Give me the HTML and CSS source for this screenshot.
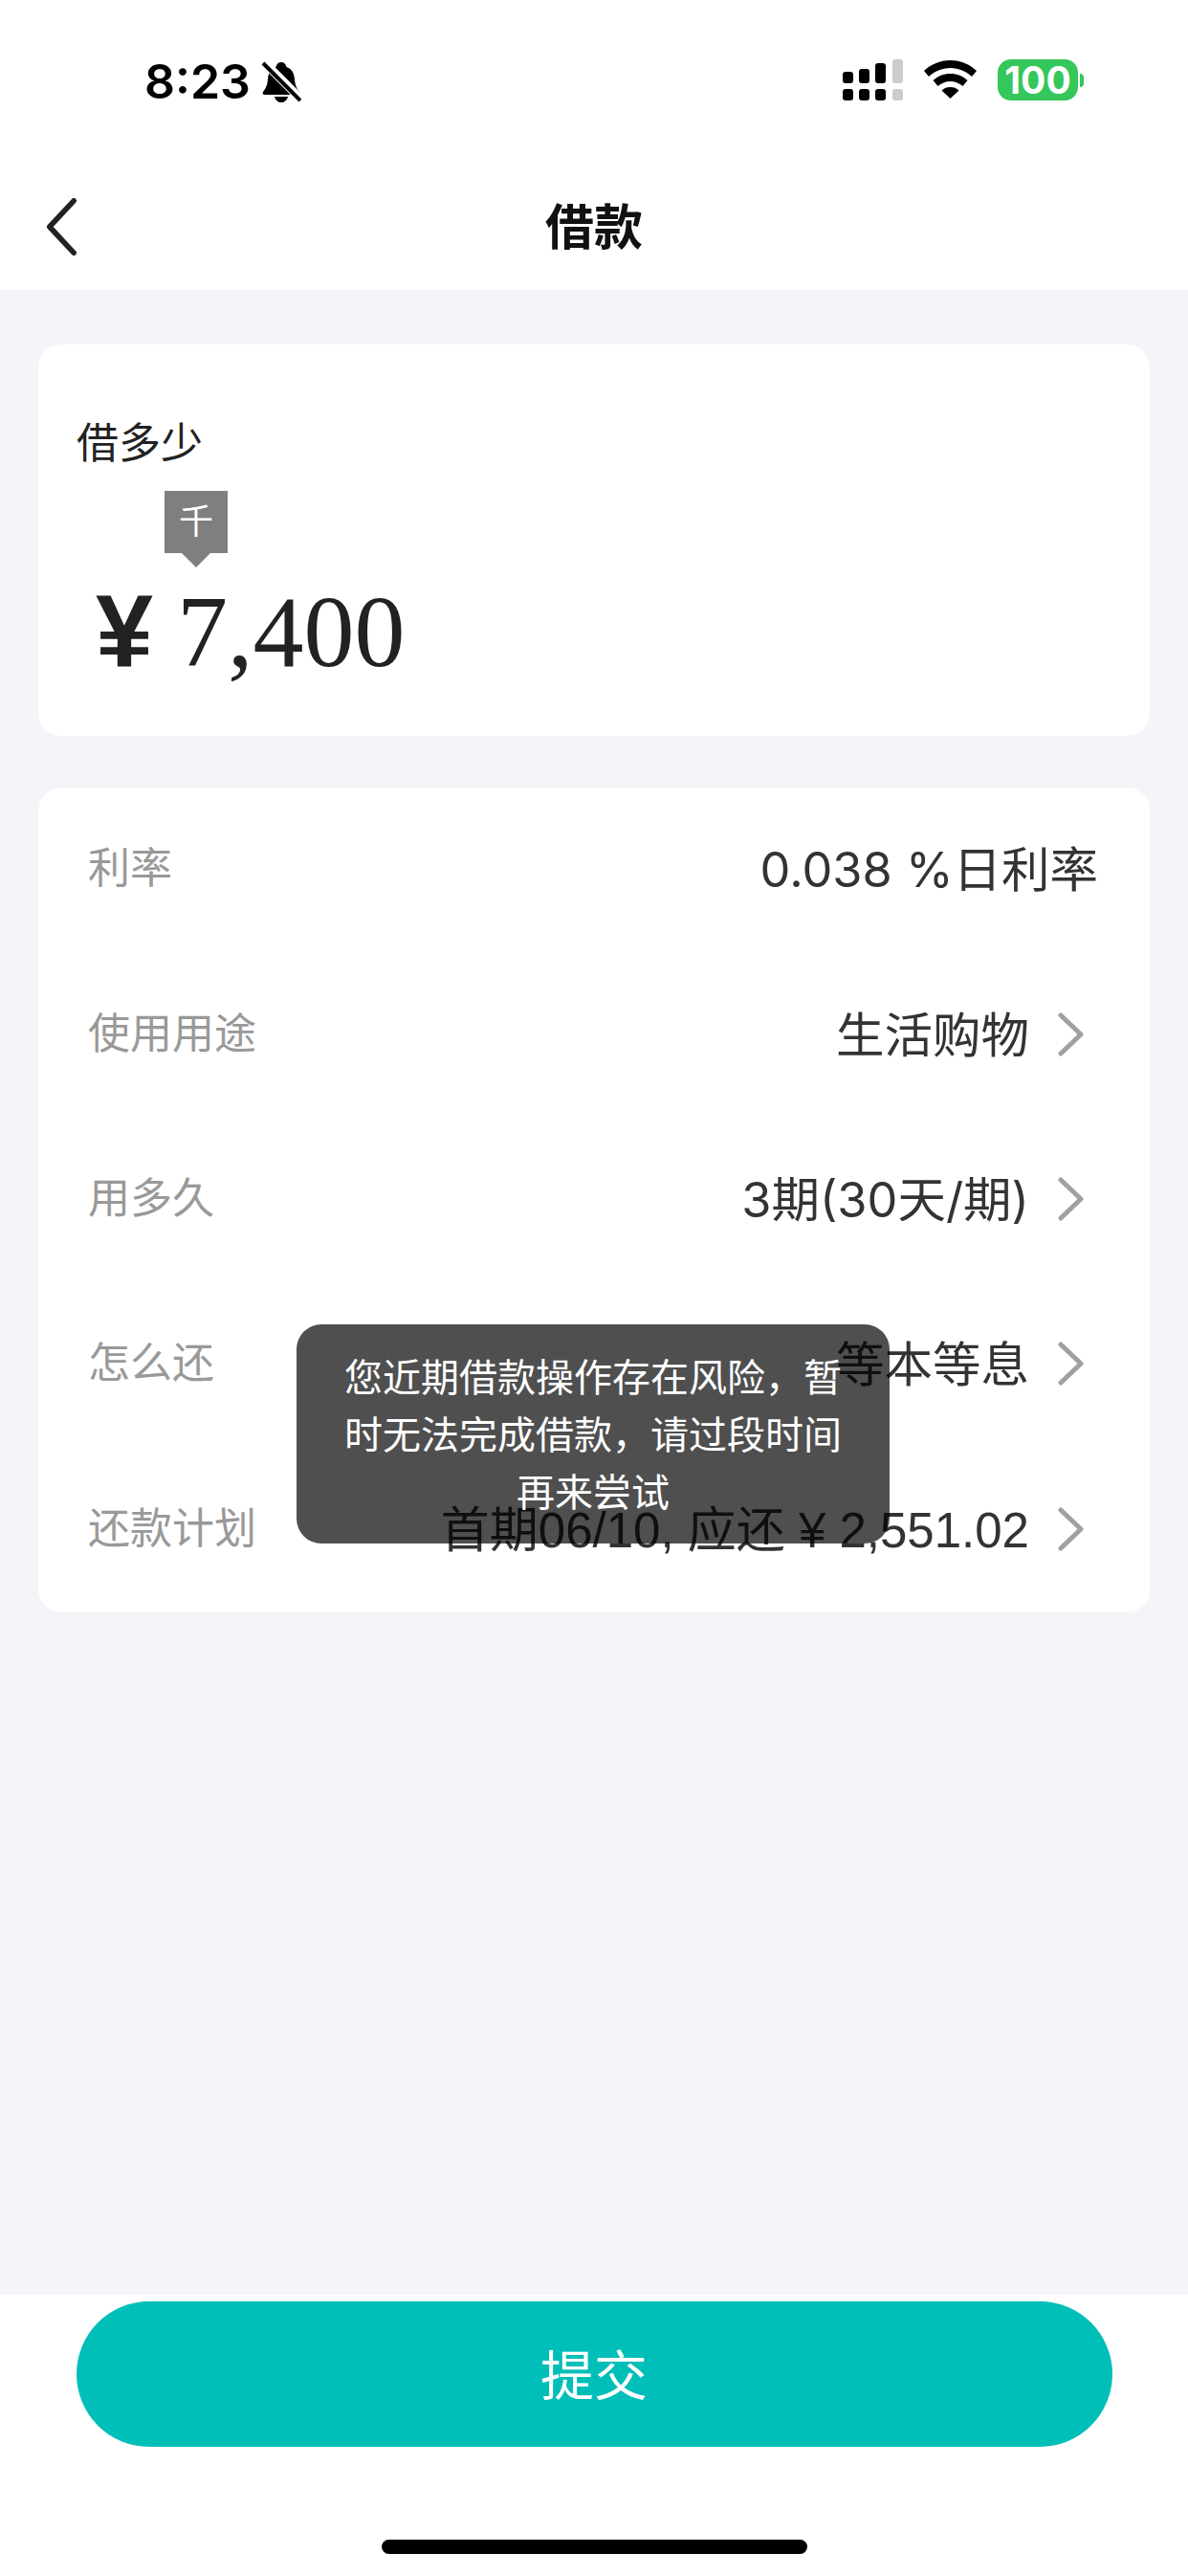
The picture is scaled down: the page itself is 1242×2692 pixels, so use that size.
FILE: index.html
```html
<!DOCTYPE html>
<html lang="zh-CN">
<head>
    <meta charset="UTF-8">
    <meta name="viewport" content="width=device-width, initial-scale=1.0">
    <title>借款</title>
    <link rel="stylesheet" href="styles.css">
</head>
<body>

<!-- Status bar -->
<div class="status-bar">
    <div class="status-left">
        <span class="clock">8:23</span>
        <svg class="bell" width="42" height="43" viewBox="0 0 42 43">
            <path d="M21 1c3 0 5 2 5.500 5 6 2 8 7 8.500 13 .5 6 2 9 5 13 1 2 0 3-2 3H4c-2 0-3-1-2-3 3-4 4.500-7 5-13 .5-6 2.500-11 8.500-13C16 3 18 1 21 1z"/>
            <path d="M14 37h14c-1 4-4 6-7 6s-6-2-7-6z"/>
            <path class="bell-gap" d="M1 -1L44 42"/>
            <path class="bell-slash" d="M2 2L41 41"/>
        </svg>
    </div>
    <div class="status-right">
        <svg class="signal" width="63" height="43" viewBox="0 0 63 43">
            <rect x="0" y="13" width="11" height="12" rx="3"/>
            <rect x="17" y="10" width="11" height="15" rx="3"/>
            <rect x="34" y="4" width="11" height="21" rx="3"/>
            <rect class="signal-off" x="52" y="0" width="11" height="25" rx="3"/>
            <rect x="0" y="31" width="11" height="12" rx="3"/>
            <rect x="17" y="31" width="11" height="12" rx="3"/>
            <rect x="34" y="31" width="11" height="12" rx="3"/>
            <rect class="signal-off" x="52" y="31" width="11" height="12" rx="3"/>
        </svg>
        <svg class="wifi" width="55" height="40" viewBox="0 0 55 40">
            <path d="M27.500 0C38 0 47.500 4 55 11l-5 6c-6-5.500-14-9-22.500-9S11 11.500 5 17l-5-6C7.500 4 17 0 27.500 0z"/>
            <path d="M27.500 14c7 0 13 2.500 18 7l-5 6c-3.500-3-8-5-13-5s-9.500 2-13 5l-5-6c5-4.500 11-7 18-7z"/>
            <path d="M27.500 28c3.500 0 6.500 1 9 3.500L27.500 40l-9-8.500c2.500-2.500 5.500-3.500 9-3.500z"/>
        </svg>
        <div class="battery">
            <span class="battery-body">100</span>
            <span class="battery-tip"></span>
        </div>
    </div>
</div>

<!-- Navigation bar -->
<header class="nav-bar">
    <svg class="back" width="36" height="64" viewBox="0 0 36 64">
        <path d="M32 3L5 32L32 61"/>
    </svg>
    <h1>借款</h1>
</header>

<main class="content">
    <section class="card amount-card">
        <div class="amount-label">借多少</div>
        <div class="unit-tag">千</div>
        <div class="amount">
            <span class="amount-sign">¥</span>
            <span class="amount-value">7,400</span>
        </div>
    </section>

    <section class="card detail-card">
        <div class="row">
            <span class="row-label">利率</span>
            <span class="row-value">0.038 %日利率</span>
        </div>
        <div class="row">
            <span class="row-label">使用用途</span>
            <span class="row-value">生活购物</span>
            <svg class="chevron" width="29" height="46" viewBox="0 0 29 46"><path d="M4 3L25 23L4 43"/></svg>
        </div>
        <div class="row">
            <span class="row-label">用多久</span>
            <span class="row-value">3期(30天/期)</span>
            <svg class="chevron" width="29" height="46" viewBox="0 0 29 46"><path d="M4 3L25 23L4 43"/></svg>
        </div>
        <div class="row">
            <span class="row-label">怎么还</span>
            <span class="row-value">等本等息</span>
            <svg class="chevron" width="29" height="46" viewBox="0 0 29 46"><path d="M4 3L25 23L4 43"/></svg>
        </div>
        <div class="row">
            <span class="row-label">还款计划</span>
            <span class="row-value plan-value">首期06/10, 应还 ¥ 2,551.02</span>
            <svg class="chevron" width="29" height="46" viewBox="0 0 29 46"><path d="M4 3L25 23L4 43"/></svg>
        </div>
    </section>
</main>

<footer class="footer">
    <button class="submit">提交</button>
    <div class="home-bar"></div>
</footer>

<!-- Toast sits over the rows -->
<div class="toast">您近期借款操作存在风险，暂时无法完成借款，请过段时间再来尝试</div>

</body>
</html>
```

FILE: styles.css
```css
/* General styles */
body {
    font-family: "Liberation Sans", "Noto Sans CJK SC", sans-serif;
    background-color: #f4f4f9;
    color: #333;
    margin: 0;
    padding: 0;
    width: 1242px;
    height: 2692px;
    display: flex;
    flex-direction: column;
    position: relative;
    overflow: hidden;
}

/* Status bar */
.status-bar {
    background-color: white;
    height: 130px;
    padding: 63px 109px 0 151px;
    box-sizing: border-box;
    display: flex;
    justify-content: space-between;
    align-items: flex-start;
    flex-shrink: 0;
}

.status-left {
    display: flex;
    align-items: center;
    gap: 11px;
}

.clock {
    font-family: Inter, sans-serif;
    font-size: 50px;
    font-weight: 600;
    line-height: 44px;
    color: black;
}

.status-right {
    display: flex;
    align-items: flex-start;
    gap: 22px;
    margin-top: -1px;
}

.bell-gap {
    stroke: white;
    stroke-width: 9;
}

.bell-slash {
    stroke: black;
    stroke-width: 4;
}

.signal-off {
    fill: #ccc;
}

.wifi {
    margin-top: 1px;
}

.battery {
    display: flex;
    align-items: center;
    gap: 2px;
}

.battery-body {
    width: 84px;
    height: 43px;
    background-color: #34c759;
    border-radius: 14px;
    color: white;
    font-family: Inter, sans-serif;
    font-size: 39px;
    font-weight: 700;
    line-height: 43px;
    text-align: center;
}

.battery-tip {
    width: 4px;
    height: 14px;
    background-color: #34c759;
    border-radius: 0 7px 7px 0;
}

/* Navigation bar */
.nav-bar {
    background-color: white;
    height: 173px;
    padding-left: 46px;
    display: flex;
    align-items: center;
    position: relative;
    flex-shrink: 0;
}

.nav-bar h1 {
    margin: 0 auto;
    padding-right: 82px;
    font-size: 51px;
    font-weight: bold;
    color: #111;
    line-height: 60px;
    position: relative;
    top: 22px;
}

.back {
    position: relative;
    top: 20px;
    height: 60px;
}

.back path {
    fill: none;
    stroke: #222;
    stroke-width: 6;
    stroke-linecap: round;
    stroke-linejoin: round;
}

/* Main layout */
.content {
    flex: 1;
    padding: 57px 40px 0;
    display: flex;
    flex-direction: column;
    gap: 54px;
}

.card {
    background-color: white;
    border-radius: 24px;
}

/* Amount card */
.amount-card {
    height: 409px;
    padding: 74px 0 0 40px;
    box-sizing: border-box;
}

.amount-label {
    font-size: 44px;
    line-height: 60px;
    color: #222;
}

.unit-tag {
    width: 66px;
    height: 65px;
    margin: 19px 0 0 92px;
    background-color: #7f7f7f;
    color: white;
    font-size: 36px;
    line-height: 65px;
    text-align: center;
    position: relative;
}

.unit-tag::after {
    content: "";
    position: absolute;
    left: 18px;
    top: 65px;
    border-left: 15px solid transparent;
    border-right: 15px solid transparent;
    border-top: 15px solid #7f7f7f;
}

.amount {
    margin: 26px 0 0 20px;
    display: flex;
    align-items: baseline;
    gap: 25px;
    line-height: 110px;
    color: #222;
}

.amount-sign {
    font-size: 108px;
    font-weight: bold;
}

.amount-value {
    font-family: "Liberation Serif", serif;
    font-size: 106px;
}

/* Detail rows */
.detail-card {
    height: 862px;
}

.row {
    height: 172.400px;
    padding: 0 54px 10px 52px;
    box-sizing: border-box;
    display: flex;
    align-items: center;
}

.row-label {
    font-size: 44px;
    color: #999;
    margin-right: auto;
}

.row-value {
    font-family: Inter, "Noto Sans CJK SC", sans-serif;
    font-size: 50.500px;
    color: #333;
    margin-top: 2px;
}

.plan-value {
    font-family: "Liberation Sans", "Noto Sans CJK SC", sans-serif;
    font-size: 51px;
}

.chevron {
    margin: 8px 14px 0 29px;
}

.chevron path {
    fill: none;
    stroke: #a0a0a0;
    stroke-width: 5;
    stroke-linecap: round;
    stroke-linejoin: round;
}

/* Footer */
.footer {
    background-color: white;
    height: 294px;
    padding-top: 7px;
    box-sizing: border-box;
    display: flex;
    flex-direction: column;
    align-items: center;
    flex-shrink: 0;
}

.submit {
    width: 1083px;
    height: 152px;
    padding-bottom: 6px;
    border: none;
    border-radius: 76px;
    background-color: #00bfb8;
    color: white;
    font-family: inherit;
    font-size: 56px;
}

.home-bar {
    width: 445px;
    height: 15px;
    margin-top: 97px;
    background-color: black;
    border-radius: 8px;
}

/* Toast */
.toast {
    position: absolute;
    left: 310px;
    top: 1384px;
    width: 620px;
    height: 229px;
    padding: 26px 50px;
    box-sizing: border-box;
    background-color: rgba(0, 0, 0, 0.69);
    border-radius: 26px;
    color: white;
    font-size: 40px;
    line-height: 60px;
    text-align: center;
}
```
